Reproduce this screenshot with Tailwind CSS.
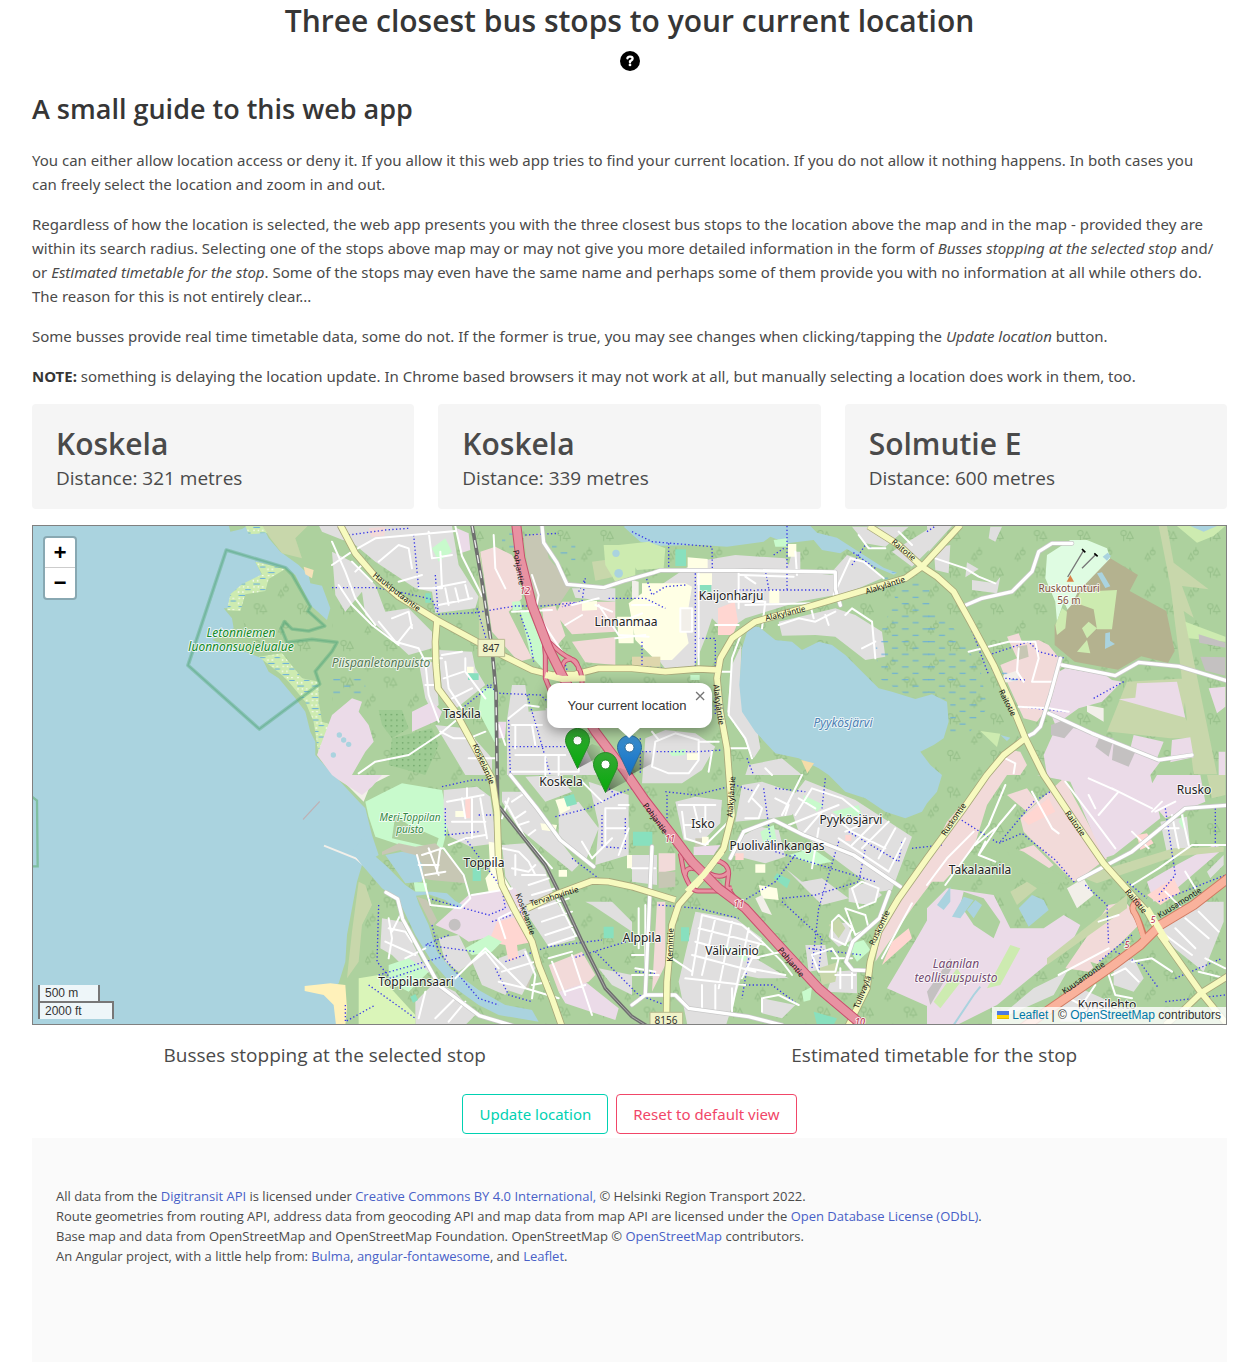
<!DOCTYPE html>
<html lang="en">
<head>
<meta charset="utf-8">
<meta name="viewport" content="width=device-width, initial-scale=1">
<title>Three closest bus stops</title>
<script src="https://cdn.jsdelivr.net/npm/@tailwindcss/browser@4"></script>
</head>
<body class="bg-white font-['Open_Sans','Noto_Sans',sans-serif] text-[15px] leading-6 text-[#4a4a4a]">
<main class="px-8">
  <header class="flex flex-col items-center pt-[3px]">
    <h1 class="text-center text-[30px] leading-9 font-semibold text-[#363636]">Three closest bus stops to your current location</h1>
    <button type="button" aria-label="Toggle guide" class="mt-3 size-5">
      <svg viewBox="0 0 512 512" class="size-5"><circle cx="256" cy="256" r="256"/><path fill="none" stroke="#fff" stroke-width="60" stroke-linecap="round" stroke-linejoin="round" d="M190 186c5-30 28-44 62-44h12c34 0 58 22 58 52 0 24-10 38-34 51l-32 20v20"/><circle cx="256" cy="356" r="35" fill="#fff"/></svg>
    </button>
  </header>

  <section class="font-['Noto_Sans','Open_Sans',sans-serif]">
    <h2 class="mt-5 mb-[21px] font-['Open_Sans','Noto_Sans',sans-serif] text-[27px] leading-9 font-semibold text-[#363636]">A small guide to this web app</h2>
    <div class="flex flex-col gap-4">
      <p>You can either allow location access or deny it. If you allow it this web app tries to find your current location. If you do not allow it nothing happens. In both cases you can&nbsp;freely select the location and zoom in and out.</p>
      <p>Regardless of how the location is selected, the web app presents you with the three closest bus stops to the location above the map and in the map - provided they are within its search radius. Selecting one of the stops above map may or may not give you more detailed information in the form of <em>Busses stopping at the selected stop</em> and/<wbr>or <em>Estimated timetable for the stop</em>. Some of the stops may even have the same name and perhaps some of them provide you with no information at all while others do. The reason for this is not entirely clear...</p>
      <p>Some busses provide real time timetable data, some do not. If the former is true, you may see changes when clicking/tapping the <em>Update location</em> button.</p>
      <p><strong class="text-[#363636]">NOTE:</strong> something is delaying the location update. In Chrome based browsers it may not work at all, but manually selecting a location does work in them, too.</p>
    </div>
  </section>

  <section class="mt-4 grid grid-cols-3 gap-6">
    <article class="rounded bg-[#f5f5f5] px-6 pt-5 pb-4"><h3 class="text-[30px] leading-10 font-semibold">Koskela</h3><p class="text-[19px] leading-[29px]">Distance: 321 metres</p></article>
    <article class="rounded bg-[#f5f5f5] px-6 pt-5 pb-4"><h3 class="text-[30px] leading-10 font-semibold">Koskela</h3><p class="text-[19px] leading-[29px]">Distance: 339 metres</p></article>
    <article class="rounded bg-[#f5f5f5] px-6 pt-5 pb-4"><h3 class="text-[30px] leading-10 font-semibold">Solmutie E</h3><p class="text-[19px] leading-[29px]">Distance: 600 metres</p></article>
  </section>

  <section aria-label="Map" class="relative mt-4 h-[500px] overflow-hidden border border-[#808080] bg-[#aad3df] font-['Liberation_Sans',sans-serif] text-xs">
    <svg viewBox="1 1 1193 498" preserveAspectRatio="xMidYMid slice" class="block h-full w-full">
      <defs>
        <pattern id="trees" width="130" height="110" patternUnits="userSpaceOnUse"><g fill="none" stroke="#8fb982" stroke-opacity=".75" stroke-width="3"><circle cx="25" cy="24" r="8"/><path d="M25 32v16M44 20l-10 20h20zM44 40v8"/><path d="M97 85l-8 16h16zM97 101v8M112 80v-14"/><circle cx="112" cy="82" r="7"/></g></pattern>
        <pattern id="marsh" width="62" height="38" patternUnits="userSpaceOnUse"><path stroke="#5fa9e0" stroke-width="3" d="M4 8h20M36 27h18"/></pattern>
        <pattern id="wetland" width="44" height="34" patternUnits="userSpaceOnUse"><path fill="#cdebb0" d="M0 0h44v34H0z"/><path stroke="#5fa9e0" stroke-width="3" d="M4 7h20M24 24h16"/><path stroke="#fff" stroke-width="4" stroke-dasharray="4 9" d="M4 16h38M2 31h20"/></pattern>
        <pattern id="orchard" width="17" height="17" patternUnits="userSpaceOnUse"><path fill="#9ecb93" d="M0 0h17v17H0z"/><circle cx="8" cy="8" r="2" fill="#589455"/></pattern>
      </defs>
      <g transform="scale(.33333)">
        <!-- land -->
        <path fill="#add19e" d="M590 0h60l-20 12-35 8zM690 0L710 40 745 80 800 120 830 150 835 175 870 182 895 250 885 285 835 240 790 150 760 130 670 110 690 150 630 180 600 205 595 250 575 250 600 280 605 310 540 345 580 360 640 380 690 400 710 440 740 460 790 520 820 560 835 620 850 650 850 690 890 735 915 760 985 835 1000 850 1020 930 1040 990 990 1020 975 1070 960 1150 945 1230 940 1310 920 1375 900 1385 915 1500 3600 1500 3600 0z"/>
        <path fill="url(#trees)" d="M900 0h2685v1500H1000V1100L1100 900 900 700zM620 170l160-10 80 150v140H700l-60-120z"/>
        <!-- west shore -->
        <path fill="url(#wetland)" d="M670 110l90 22-50 30-10 36-60 10-15 50-40-2 10-48 35-30 60-30zM680 395l70-10 60 75 50 10v60l10 60 30 10-40 90-15-100-25-60-50-60-20-20zM640 3h60l10 20-60 5z"/>
        <path fill="#c8d7ab" d="M690 0h140l-40 40 20 60-60-15-35-45z"/>
        <path fill="#f5e1b9" d="M815 125l30 10-5 25-20-12z"/>
        <path fill="#c7a0a0" opacity=".7" d="M812 882l50-54 2 3-50 54z"/>
        <path fill="none" stroke="#7fbfa0" stroke-width="7" d="M0 815l15 12 2 197H0"/>
        <path fill="none" stroke="#f2efe9" stroke-width="6" d="M876 962l95 38 60 50"/>
        <g transform="translate(900 0)">
          <path fill="#e0dfdf" d="M-40 0l70-5 330 8 20 117 60 95-10 35-120 15-10-65-50-10-120-80-60-50-100-40zM0 80l60 30 70 70 30 80 70-10 70 70v50l-70 20L100 270l-10-70-50 60-30-50zM320 375l100 5 10 50 30 50-100 80-30-60zM260 410l50 2 10 128-20 20-20-40zM310 600l90 10 80 90v50h-80l-30-50zM525 585l15-105h40l10 80 60-5 50 55 45 140H525zM720 190h130v40l-120-12zM640 550h60l100 200h-100z"/>
          <path fill="#f2dad9" d="M445 80l45-15 50 25 20 40 10 90-40 40 70 140-40 10-80-90zM610 180l45-15 10 35-20 30zM630 250l40-8 30 90-30 36-30-38zM690 230h160v90l-130 8-50-60zM720 350l130-14v84l-90-8zM110 10l50-5-3 28-40 3z"/>
          <path fill="#c8facc" d="M565 255l25 5 50 120-5 55-40-45zM450 490h45v175l-55-105zM540 230l25-2 5 25-28 5zM300 70l40-30 20 40-40 30z"/>
          <path fill="#c7c7b4" d="M575 35l60-15 15 80 70 80-40 60h-60l-30-90z"/>
          <path fill="#c8d7ab" d="M440 85h6l20 230 15 15-10 50-30-20z"/>
          <path fill="#ebdbe8" d="M0 570l60-50 30 10-10 30 30 40 15 50-25 30-40 70H0l-45-60zM240 560l60-30 30 30-10 25-80 35zM375 10l35 15 5 50-30 10zM495 590h28l-4 50h-24z"/>
          <path fill="url(#orchard)" d="M140 555h70l20 55-50 30-30-40zM180 640l120-30 20 50-40 90-110-30z"/>
          <path fill="#c8d7ab" d="M780 110l60-8v55l-50 10z"/>
          <path fill="#cdebb0" d="M815 60h95v90l-60 20-30-50z"/>
          <circle cx="852" cy="85" r="11" fill="#aad3df"/><circle cx="860" cy="145" r="13" fill="#aad3df"/>
          <path fill="#ffffe5" d="M750 232l45-5v28l-45 2zM405 425h20v20h-20zM855 275h50v80h-45z"/>
          <path fill="#88e0be" d="M280 205h16v28h-16zM408 445h32v20h-32z"/>
          <path fill="url(#marsh)" d="M0 455h100v60H0zM510 20h40v60h-40zM660 60h70v50h-70z"/>
          <g fill="#aad3df"><circle cx="22" cy="630" r="8"/><circle cx="35" cy="645" r="8"/><circle cx="50" cy="658" r="8"/><circle cx="4" cy="690" r="8"/></g>
        </g>
        <g transform="translate(1800 0)">
          <path fill="#aad3df" d="M-20 3h555l20 20 60 15 30 20 110 70 40 15-10 6-60-25-80-52-20 13-55-10-25-30-80 10-50-20-20 15-110 15-80-5-120 2-60-12-50-45z"/>
          <path fill="#cdebb0" d="M-40 60l90-10 50 20-5 60-80 5z"/>
          <path fill="#e0dfdf" d="M190 110l120-20 150 10 20 40 130 10v60l-110 20-160 50-60 40-40-40-20 60-40 100-70 5-30-40-30-200zM660 5h170l-70 60-60-10zM600 140l45-50 60 20 45 50-70 30-60 20zM440 290l170-40 60 20 80 50 10 75-60 10-90-70-60-5-100 2zM300 420l28-60-3 110 10 60 40 80 10 60-20 30-30-60-50-80zM40 640l60-25 90 10 60 40-40 70-60 40H30zM350 720l100-20 60 50H340zM780 80l120-75v60l-60 60zM480 80h25l0 65-40-5z"/>
          <path fill="#ffffe5" d="M30 175h130l20 10-20 120 10 50-50 50H70l-60-60-20-110 40-30zM167 97l60 5v32h-60zM195 145h45v35h-45zM468 57h25v38h-25zM412 195h30v40h-30zM165 685h35v20h-35z"/>
          <path fill="#f2efe9" d="M145 250h40v70h-40zM0 165l20 5v50H0z"/>
          <path fill="#ffd6d1" d="M258 250l50-20 10 60-15 40h-45z"/>
          <path fill="#88e0be" d="M130 73h32v50h-32zM203 180h35v20h-35z"/>
          <path fill="#c8facc" d="M110 680l50-8v18l-40 4zM425 45l40-5v25h-35zM175 450h28v15h-28z"/>
          <path fill="#ded6ac" d="M0 395h85v30H0z"/>
          <path fill="url(#marsh)" d="M740 130l160 40v330l-60 20-100-60-10-100 60-140z"/>
          <path fill="#aad3df" d="M350 305L380 305 430 345 480 350 510 375 560 350 600 360 640 390 700 450 740 490 780 500 850 522 900 508 945 530 950 590 935 640 905 660 865 680 895 720 930 750 915 800 885 835 870 860 820 880 760 860 700 820 640 800 590 750 560 730 500 700 430 685 370 620 330 560 322 480 330 370z"/>
          <path fill="#f5dca8" d="M508 705l38 10-20 30z"/>
        </g>
        <g transform="translate(2685 0)">
          <path fill="#e0dfdf" d="M0 3h75L5 80zM190 5h35l-20 45-20-10zM20 70l50-10-5 85-40-10zM120 112l35 20-40 25zM135 165l70 10 15-20-10 50-75-10z"/>
          <path fill="#c8d7ab" d="M695 3h25l20 110 105 80-80-10 35 95-30-20 100 490h-70L730 180zM540 620l60-150 180-10-10 110 40 70-80 0-180-20z"/>
          <path fill="#dffce2" d="M430 45h50l60 25 10 30-50 70-30 50-40 50-20-40-20 60-5-60-30-70 5-70z"/>
          <path fill="#b4b28f" d="M550 100l83 50-25 48 110 60 25 120-20 36-80-20-70 40-130-24-60-50v-60l50-60 20-40z"/>
          <path fill="#cdebb0" d="M460 200l110-5-15 118h-45l-10-60-55-20zM385 300l20-50 15 10-5 50-25 20zM465 310l20-20 25 20-30 30zM450 380l30-35 10 40zM750 3h145l-35 30-50 20zM775 290l120 45v15l-110-10zM160 618l60 8-10 40z"/>
          <path fill="#aad3df" d="M510 145l15-3 25 42-15 5zM527 95l15-12 10 10-12 14zM535 325l14-3 0 25 15 10-30 15zM790 3h80l-40 17zM172 350l10 20 5 8-12-2zM220 630l30 8-10 10z"/>
          <path fill="#ebdbe8" d="M415 430l120 20 20 15 30 5-60 60-70 20-70 50-20-50 30-110zM630 475l120-5 25 108-200-55 50-5zM390 600l110 20 200 90-30 40H410l-60-60zM620 630l90 20-20 50-80-30zM735 645l55-8 10 60-70 15zM845 490l50-5v60l-25 20zM350 690l60-30 80 10-30 80H360zM875 680h20v70h-20z"/>
          <path fill="#f2dad9" d="M240 335l35-10 10 25 50-5 30 15 40 50-15 60-30 80-30 40-40-10-50-110-20-50 50-20zM190 750l60-75 30 5 20 40-20 30z"/>
          <path fill="#c4c1c1" d="M815 328l80 25v15l-78-15zM820 395l75 2v55l-60-15zM520 630l40 10-15 55-40-30zM560 655l65 25-20 45-50-20zM372 600l40-15 30 20-30 35-40-10z"/>
          <path fill="#c7c7b4" d="M270 365l30-5 5 35-30 10z"/>
          <path fill="#f2efe9" d="M480 540l50 10v40l-50-30zM230 450l45-15v30l-50 10z"/>
          <path fill="url(#marsh)" d="M0 250l60 30 100 150 20 120-50 70-60 10V530l-70-30zM225 440h50v30h-50z"/>
        </g>
        <g transform="translate(900 750)">
          <path fill="#f2efe9" d="M15 0h160l-60 30-20 50z"/><path fill="#ebdbe8" d="M0 0h150l-30 35-30 25-70-45z"/>
          <path fill="#c8facc" d="M100 80l50-25 60-30 120 20 20 100-20 80-50 10-150-50-20-60z"/>
          <path fill="#add19e" d="M190 120l40 30 90 40-10 30-130-30z"/>
          <path fill="#c7c7b4" d="M150 230l50-25 50 10 60-10 60 60 35 60-110-10-40-10 10-40-60-40-55 15zM255 365l30 10 30 60-15 20zM375 510l50 55-10 10-45-35zM540 600l60-10-10 50-60 10z"/>
          <path fill="#e0dfdf" d="M335 45l100-10 40 30 20 140-80 10-60-30-20-60zM510 50h60l170 220-20 20-160-130-50-80zM580 5l100-5 40 50-80 30zM510 210l70-5 60 80 30 90 40 60 20 60-80 20-60-90-70-120zM680 100l60-20 60 80-40 100-80-80zM770 20l120 40v180l-100 30 10-120zM150 430l60 10 60 120 30 30-60 10-60-60-35-20zM320 490l60-10 40 80-40 30-40-30zM420 560l40-30 50 30 40 50-30 50-70-30zM500 550l80-30 30 60-40 80-60-20zM250 680l60-60 60 30 60 70-30 30H250zM760 380l80 0 60 60v30l-60-40-60-40zM800 580l100 20v60l-60-30z"/>
          <path fill="#ebdbe8" d="M310 450l100-90 140-20 30 80-80 60-90 20-30-20zM680 650l80-30 100 80-10 35-150-50z"/>
          <path fill="#ffd6d1" d="M495 440l80-20 30 80-50 10 5 40-30 10-10-50-50-10zM400 70h15v60h-15zM690 560l40-10 10 50-50 10z"/>
          <path fill="#f2dad9" d="M650 570l100-40 40 70-20 20-90 30z"/>
          <path fill="#ffffe5" d="M470 200l30 5 10 90 30 50-70 5-10-40 15-20zM370 108h28v18h-28zM670 75l35-8 10 35-30 15zM625 145l50 5-5 20-40-5zM680 285h25v20h-25zM885 240h20v40h-20z"/>
          <path fill="#c8facc" d="M400 520l70-40 40 20-30 30-60 10zM245 320l40 5v25h-35zM170 570l60-20 60 40-60 60-60-30z"/>
          <path fill="#88e0be" d="M422 280h25v38h-25zM695 65l30-8 10 30-30 8zM815 455h30v35h-30zM235 665l15-8 8 18-15 8z"/>
          <circle cx="368" cy="449" r="18" fill="#c4c1c1"/>
          <path fill="#c8d7ab" d="M80 320l20 10 20 60-30 60-10 110-35 50 5-50 10-90z"/>
          <path fill="#daf5b9" d="M80 610l60-10 110 120v30H80z"/>
          <!-- harbour basin and channel -->
          <path fill="#aad3df" d="M160 240L210 230 250 240 272 270 270 320 220 325zM60 230L100 180 125 240 160 270 220 330 250 350 300 350 345 355 370 378 395 392 375 402 340 375 290 358 252 362 262 390 290 450 315 530 360 585 440 645 520 690 600 705 620 740 500 720 440 690 370 640 300 560 250 480 200 375 150 340 90 270z"/>
          <path fill="#fff1ba" d="M-82 633L-5 625 40 630 45 700 40 750H12L5 690-25 660-82 648z"/>
        </g>
        <g transform="translate(1800 750)">
          <path fill="#e0dfdf" d="M130 80l60-15 80 10-5 70-60 60-50-10zM190 410l120 20 80 60-20 60 100 60-90 0-50-10-70 220-90-50-30-150zM330 30l60-10 120 40-30 60-60 10-110 10zM470 80l50-65 150 60 170 110-60 160-40 5-240-180zM320 190l60-35 60 10 20 80-60 20-100-25zM460 280l50 40 60-10 80 60-80 20-60-60zM650 340l60-20 40 40-40 30-60-10zM600 440l50 5 10 50-40 20-30-30zM520 510h60l10 70-60 10zM605 590l70-5v70l-90-5zM0 240l75 0v90L0 320zM150 600l120 30 20 80-110 0zM390 670l100 20-40 40-60-15z"/>
          <path fill="#f2dad9" d="M80 235h50v50l-50 10zM75 380h25v190l-40 80zM850 300l50-60v80l-60 80-110 160 20-110z"/>
          <path fill="#ebdbe8" d="M900 410v290l-135-60 95-160zM185 215l80-5-20 30h-60z"/>
          <path fill="#c7c7b4" d="M80 290h50v45l-50 5zM190 190l40 0v20l-40 5z"/>
          <path fill="#c8facc" d="M515 60l60 30-20 20-40-30zM385 170l40-20 10 50-40 10zM470 240l70-20 60 40-50 10zM645 510l50-15 20 30-40 35zM510 650l30-15-5 40-20 5zM270 510l80 20-10 30zM600 110l80-20 10 30-60 10z"/>
          <path fill="#88e0be" d="M3 170h58v42H3zM425 310l10-15 40 20-10 25zM147 457h24v42h-24zM545 710l70 20-10 20h-50z"/>
          <path fill="#ffffe5" d="M380 330l55 10 5 35-50-5zM370 268h30v25h-30zM210 185h20v25h-20z"/>
          <path fill="#c8d7ab" d="M590 450l30-20 20 30-20 30zM560 580l60-20-10 60-40 10z"/>
          <path fill="#ffd6d1" d="M310 235h25v20h-25zM640 180h18v18h-18zM780 500l50-40 10 30-90 80z"/>
          <path fill="#f2efe9" d="M370 370l20-10 30 60-30-10z"/>
        </g>
        <g transform="translate(2685 750)">
          <path fill="#f2dad9" d="M60 140l120-140h60l-60 90-40 130-90 100-50 0v-60zM280 130l130-120 130 240-80 60-20 10-150-150zM415 580l130-190 50-10 50 60-60 60-100 90zM260 230l60-20 60 60-30 20zM240 60l60-20 30 40-30 30z"/>
          <path fill="#ebdbe8" d="M330 0h340l30 130-140 110-30 10L430 20zM0 400l60-60 140 20 50 100 100 0 60-40 50 30-30 60-220 180-120 60H0zM690 0h130l15 80-120 50-60-70zM660 320l70-40 130-70 30 10-140 120-70 40z"/>
          <path fill="#ffd6d1" d="M285 130l80-60 20 40-80 40zM630 180l30-5 20 30-40 20zM660 360l80-50 20 40-60 40z"/>
          <path fill="#f2efe9" d="M420 340l50-30 30 50-50 40z"/>
          <path fill="#e0dfdf" d="M700 140l80-15 10 100-70 10zM320 640l100-50-40 70-180 80zM560 570l60-20 30 60-30 40-60-20zM400 700l60-60 90 40v60H400zM700 460l110-80 80 0v60l-60 150-100-80zM840 290l50-50v30l-40 40z"/>
          <path fill="#c4c1c1" d="M0 650l70-100 10 20-70 120z"/>
          <path fill="#c8d7ab" d="M460 305l280-85 150-5v15l-150 15-230 80zM600 360l-240 190 0 20 240-170zM840 0h55v60l-40 10zM250 350l50-30 30 20-60 50z"/>
          <path fill="#cdebb0" d="M20 680l70-100 20 30-70 90zM180 640l70-130 30 10-60 110z"/>
          <path fill="#add19e" d="M110 350l60 20 50 70-20 50-60-40-40-60zM230 210l60 20 140 90-80 5-60-10zM490 560l30 10-10 30z"/>
          <path fill="#aad3df" d="M30 390l40-55v45l-20 25zM75 425l35-60 30 10-40 55zM120 405l25-30 20 15-25 40zM275 400l40-40 35 15 15 30-60 50z"/>
          <path fill="none" stroke="#aad3df" stroke-width="6" d="M80 750l60-90 20-25"/>
          <path fill="#c8facc" d="M755 140l15-25v50z"/>
        </g>
        <!-- paths and cycleways -->
        <g fill="none" stroke="#3838e8" stroke-width="4" stroke-dasharray="4 7">
          <path d="M900 188h130l60 10 110 25 20 45 110-5 120-20h80l100-10M950 30l110-15 70-5M1145 30l15 160M1335 250l45 150 10 70-100 80M1210 150l8 110M1365 480l40 25 120 5 45 40 5 40M1430 585l5 160M1430 665h190M1485 510l30 100 40 140M1465 270l30 80 10 60M1480 30l100-5M1600 420l20 60-50 40M1640 200l20-40-10 70-60 15M1730 220h110l60 30"/>
          <path d="M1800 20l60 30 180 15 1 65M1910 55v75M1900 135h300l10 55M2265 3v190M2110 195h280M1990 145v280M1960 180l-60 5-40 25-20-60M1830 350v75l120 10M2000 340h50v90M2050 420v150M1825 640v110M1830 680h170l70-5M2145 700l20 50M2225 90l30-20M2460 120l40-60 20 10M2530 130l-70-50M2690 130l60 60 60 100 60 160"/>
          <path d="M2685 20l30-20M2790 240l100 210 80 160 60 120M2870 390l120-40 30 30 80 20M3185 520l90-50M2920 460l60 5M2965 545l140 15"/>
          <path d="M1230 785l90-20h80M1240 850v80l100-10M1340 870h60M1300 940l110 150 10 60-50 20-180-50M1040 1140l-5 170 40 50 120-40M1200 1200l20 80 120 140 60 20M1250 1230l-70 30 150 20M1380 1190l90-30M1420 1310l130-45 160-20M1390 1330l40 80 70 20M1620 1300l130-40 70-20M1700 760l50 50 50-20M1710 870v100M1570 875l100-25 100-50M1620 1000l80 60M1780 880v90l-70-5M940 1440v50l90-50M1010 1380l140 100M1040 1350l210-60M1690 1280l130 130 80 30"/>
          <path d="M1900 800l90 10 120-30 60 20M1905 810v100M2195 790l20 150M2230 790l90 10M2205 945l30 20M2230 980l100 30 200 60M2290 990l-60 80-100 60M1880 1140l120 10 120 30M2250 1120l100-10 130-40 20-100M2250 1130l120 110-10 100M2420 950l-60 200-20 180M2380 760l-10 90M2450 920l150 90 10-60M2640 970l90-10M1810 1340l60 5M2140 1380l80 0 80 60M2330 1270l160 20M2150 1300l-20 120"/>
          <path d="M2780 880l120 75 70-30 100 80 60 70M2905 950l100-120 50-30M3160 1080l65 60 5 120M3285 1070l60 50M3400 850l30 200-50 60M3550 850v120M3300 1230l-100 80M3250 1280l80 40 50 70M3190 1340l-90 80M3380 1130l200-80M3430 1360l140-60M3400 1430l180-20"/>
        </g>
        <!-- local streets -->
        <g fill="none" stroke="#fff" stroke-width="6" stroke-linecap="round" stroke-linejoin="round">
          <path d="M900 120l60-40 70-40 110-10 130-12M900 50l40 90 30 80 60 80M920 180l40 60 60 60 80 60M960 110l60 60M1000 110l-30 30M1040 110l60-50 30 10 10 60M1100 170l70-20M1190 20l10 80M1200 190l100-20M1160 190h70l-5-110M1220 240l100-20M1240 190l10 50M1270 190l10 40M1300 180l10 40M1200 100l60-10M1080 280l50-20 10 50M1040 290l50 60 70 20 20 40M1100 350l40-50M1170 400h60M1180 410l10 100 30 80M1230 390l60-10M1235 460l60-20M1260 520l60-30M1300 400v40l60 80M1240 410l10 80 40 60M1180 480h40M1225 620l40 20 60 0 10 40M1310 640l50-20M1310 700h80M1430 580l50-40 40 5M1440 600h90M1500 600l10 60M1450 690h150M1540 690v60M1580 690v60M1600 640h60M1640 680v60M1400 600l20 60M1440 740h200M1450 600v70"/>
          <path d="M1500 150l20 60-10 50 40 60 40 60M1440 260l120-5M1700 240l60 90 90 5M1620 240l80-20M1780 285l50-20M1600 300l50-30M1750 340l90-10M1740 260l-50-20M980 745l50-35 100-20 90-60 60-50"/>
          <path d="M1385 30l5 100 30 60M1270 3l20 90 60 120M1800 240h70M2000 140v300M2120 140v110M2125 150l160 5M2140 155l30 20M2290 80l5 70M2090 230h110l-10 80M2140 240l200-5M2120 300h-70M2240 300l60-20 50 10 60-30M2335 240l10 40M2380 270l10 30M2405 210l50-110 40 10 60 50M2440 270l20-20 60 40 10 110M2490 370l40-20M1945 250h35v70h-35zM2130 320l-30 80-10 170 50 70 20 60M2065 440h30M2095 670l50 0M1870 650l60-25 70 20v60l-30 40-60 0-50-20zM1860 620l20 25M2000 650h60M2040 680l-10 60M2200 730l20 20M2480 30l30 40 50 0M2600 20l40 40"/>
          <path d="M1245 830l110-20M1260 890h100M1250 960l50-20 60-10M1290 820l10 60M1320 820v120M1345 820l20 120M1305 790v30M1170 990l60-20M1160 1020h60M1180 1050l60-10M1190 970l30 80M1225 970l-10 70M1155 990l40 150 90 10 30-30-20-70-60-80M1320 1110l120-20M1430 820l-20 60M1420 830l60 110 80 90M1440 830l30-20M1450 880l30-20M1460 900l30-10M1490 930l20-15M1410 970l50 10 30 30 20 40M1440 1030l50 10 20-20M1450 990v60M1470 1050l70 0M1490 1080l60-20M1500 1110l70-20M1520 1150l90-30M1530 1190l90-30M1540 1230l90-30M1550 1260l90-30M1570 1110l60 120M1550 1300l70-20M1560 1310l40 100M1620 1290l60 180M1600 1400l60-20M1760 840h30M1650 770l60 60M1720 850h60M1720 910h60M1740 940l-60 60M1790 910l-30 80M1720 850v110M1650 950l30 50"/>
          <path d="M1070 1180l10 60-10 60M1070 1210l50 10 20 30M1060 1250l90 40M1110 1160l-30 60M1120 1300l60-30M1270 1360l90-90 60 60 60 60 100 30M1310 1320l50-40 40 50M1400 1180l20 60M1400 1180l60-30M1480 1280l30 70-10 70M1410 1340l100-30M1400 1370l80 20M1500 1380l50-10M1210 1480l60-60M1250 1490l50-60M1160 1480l20-80"/>
          <path d="M1940 840l110 0M1950 860l10 80 60 20 80-80M1985 840l20 80M2020 840v60M1960 900h80M2160 820l30 30-10 30-40 0M2230 820l40 20-10 30M2180 780l-30 50M2250 870l60-120M2290 870l50-80 90 30 50 40M2270 900l150-60M2400 870l60 50 100 50M2440 920l70-30M2460 960l80-80M2490 970l80-80M2540 1000l50-90M2570 1040l50-100M2420 940l150 100M2360 910l-10 60-10 60M2300 820l50 30M2370 860l-60 70M2460 1090l30-20 50 20-10 40-50 20zM2440 1150l60 20 10 40-40 20zM2400 1190l20-20 40 40-20 50-40-20zM2340 1290l60-20 20 30-10 40h-50zM2400 1300h60M2410 1350h60M2425 1330v60M2460 1330v60M2640 1135l-90 165"/>
          <path d="M2010 1170l120 30 60 50M2010 1170l-20 120-10 60M2000 1210l200 50M1990 1250l190 50M1980 1290l190 50M2050 1180l-40 170M2100 1190l-40 200M2150 1210l-50 240M2180 1260l-50 100M2150 1330l110 20M2160 1300l90-20M2190 1250l60 60 30 40M1960 1360l180 20M2010 1380v70M2050 1380v80M2100 1390v70M1980 1340l-60-40M2190 1420l50-10 60 30M2190 1420v40M1800 1030h70M1800 1290h40M1810 1330l60 10M1840 1140v200M1820 1150v120M1800 1350h80"/>
          <path d="M2810 380l80-20 40-10 80 0 10 50-20 70h70M2960 370l-5 70 20 30M2960 545l90 5 60 10M2710 100l90 30 40 25 50 20M2920 700l30 15-5 30M2740 1080l130-180 50-120M2685 1080l60-80 80-80M2840 990l60-90 50-60M2830 960l60-50M2860 950l-20 40 50 20M3000 800l60 110 20 15M3100 770l150 200M3170 760l90 40-60 70M3240 790l120 60M3190 850l-20-40M3370 860l60-30M3360 860l30-30M3300 920l30 30 20 20M3380 910h60M3420 870l20 100M3450 870l20 90M3300 1080l80-50 100-70 110 0M3400 1100l60 60M3460 1040l30 50M3080 1350l150-80M3300 1310l60-10 60 40M3240 1350l40-20 40 40M3430 1210l60 60M3460 1180l70 60M3500 1160l60 60M3400 1230l80 60M3520 1300l60 30M3500 1340l80 20M3200 1190l60-20M3230 1350l20 60 50 10M3150 1440l40-60M3110 1420l40 20"/>
        </g>
        <!-- tertiary roads -->
        <g fill="none" stroke="#c8c8c8" stroke-width="14" stroke-linecap="round" stroke-linejoin="round"><path d="M1530 3l5 50 40 60 30 65 110 10 60-20 90-25 20-7h225l300 5v50l15 50M1435 750l80 100 70 95 100 80M1062 1102l35 20 15 60 60 110 50 90 120 90 100 30M2095 1000l40-80 90-35 90 45 150 60 140 95M2572 1100l-30 80-80 70-20 60 20 25 50 2M1800 1440l40-30h90l40 40 180 25 100 25M1860 965l-20 440M3085 400l-30 110-30 95-20 20-40 20M3090 420l100 20 60 12 70-40 120 12 150 45M3600 840l-140 10-160 130-160 85M2790 245l60-25 90-20 60-60 20-60 40-25 60 0M3050 565l130 60 200 80 100-15"/></g>
        <g fill="none" stroke="#fff" stroke-width="10" stroke-linecap="round" stroke-linejoin="round"><path d="M1530 3l5 50 40 60 30 65 110 10 60-20 90-25 20-7h225l300 5v50l15 50M1435 750l80 100 70 95 100 80M1062 1102l35 20 15 60 60 110 50 90 120 90 100 30M2095 1000l40-80 90-35 90 45 150 60 140 95M2572 1100l-30 80-80 70-20 60 20 25 50 2M1800 1440l40-30h90l40 40 180 25 100 25M1860 965l-20 440M3085 400l-30 110-30 95-20 20-40 20M3090 420l100 20 60 12 70-40 120 12 150 45M3600 840l-140 10-160 130-160 85M2790 245l60-25 90-20 60-60 20-60 40-25 60 0M3050 565l130 60 200 80 100-15"/></g>
        <!-- railway -->
        <g fill="none"><path stroke="#6f6f6f" stroke-width="11" d="M1320 0l30 170 30 200 12 130 5 340 63 80 80 100 50 100 60 130 70 140 80 85 80 50"/><path stroke="#eee" stroke-width="4" stroke-dasharray="24 22" d="M1320 0l30 170 30 200 12 130 3 250"/><path stroke="#aaa" stroke-width="3" d="M1397 840l63 80 80 100 50 100 60 130 70 140 80 85 80 50"/></g>
        <!-- ski lifts -->
        <path fill="none" stroke="#777" stroke-width="4" d="M3107 156l48-80M3150 130l42-42"/><path d="M3150 72l10 10M3187 85l10 9" stroke="#000" stroke-width="5"/><path fill="#db8348" d="M3104 170l11-20 11 20z"/>
        <!-- secondary roads -->
        <g fill="none" stroke-linejoin="round">
          <path stroke="#a8a87a" stroke-width="22" d="M925 0l45 85 60 70 70 60 115 70 120 65 85 45 80 40 60 15 70-2 70-18h100l100 10 100-8 58 3M1215 285l-5 65 2 70 6 70 52 70 60 110 50 90 15 100 5 160 10 60 35 70 55 100 20 70 40 100 35 100 210 35M1485 1150l95-45 100-37 50 2 70 15 130 40M2670 125l-50 35-120 35-170 50-160 45-70 50-35 60-10 60 10 100 20 110 15 200-25 100-65 90-70 80-20 60-15 170-2 150M2510 3l90 57 70 65 45 30 50 45 50 90 70 130 50 110 45 110 55 110 80 120 100 145 130 145 40 70 120 170 90 110M2670 125l115-125M2980 640l-65 50-50 60-70 100-110 150-85 120-60 100-25 90-10 80-60 120M3400 1500l60-50 50-48 80-50"/>
          <path stroke="#f7fabf" stroke-width="17" d="M925 0l45 85 60 70 70 60 115 70 120 65 85 45 80 40 60 15 70-2 70-18h100l100 10 100-8 58 3M1215 285l-5 65 2 70 6 70 52 70 60 110 50 90 15 100 5 160 10 60 35 70 55 100 20 70 40 100 35 100 210 35M1485 1150l95-45 100-37 50 2 70 15 130 40M2670 125l-50 35-120 35-170 50-160 45-70 50-35 60-10 60 10 100 20 110 15 200-25 100-65 90-70 80-20 60-15 170-2 150M2510 3l90 57 70 65 45 30 50 45 50 90 70 130 50 110 45 110 55 110 80 120 100 145 130 145 40 70 120 170 90 110M2670 125l115-125M2980 640l-65 50-50 60-70 100-110 150-85 120-60 100-25 90-10 80-60 120M3400 1500l60-50 50-48 80-50"/>
        </g>
        <!-- motorway, trunk road and ramps -->
        <g fill="none" stroke-linejoin="round">
          <path stroke="#c84e6d" stroke-width="15" d="M1535 330l5 60 0 70 20 50M1550 350q40 40 65 50q30 20 35 60l0 60M1590 470q-5-60 15-65q30-10 35 30M1945 985l10 55q20 60 45 58h70l30-10M2050 1005q40 10 40 40l-5 40 20 30M2090 1040q-20 25-60 5M1960 1050q0-30 40-15"/>
          <path stroke="#e892a2" stroke-width="9" d="M1535 330l5 60 0 70 20 50M1550 350q40 40 65 50q30 20 35 60l0 60M1590 470q-5-60 15-65q30-10 35 30M1945 985l10 55q20 60 45 58h70l30-10M2050 1005q40 10 40 40l-5 40 20 30M2090 1040q-20 25-60 5M1960 1050q0-30 40-15"/>
          <path stroke="#c84e6d" stroke-width="30" d="M1453 0l12 100 35 140 50 130 40 80 50 90 50 80 90 120 55 80 85 110 60 80 80 80 80 60 100 110 120 130 130 110"/>
          <path stroke="#e892a2" stroke-width="24" d="M1453 0l12 100 35 140 50 130 40 80 50 90 50 80 90 120 55 80 85 110 60 80 80 80 80 60 100 110 120 130 130 110"/>
          <path stroke="#d07a62" stroke-width="30" d="M2970 1510l145-100 130-90 80-60 60-60 100-60 110-85"/>
          <path stroke="#d07a62" stroke-width="20" d="M3335 1230q-20-60-30-70q-10-25 20-30"/>
          <path stroke="#f9b29c" stroke-width="24" d="M2970 1510l145-100 130-90 80-60 60-60 100-60 110-85"/>
          <path stroke="#f9b29c" stroke-width="15" d="M3335 1240q-20-70-30-80q-10-25 20-30"/>
          <path stroke="#f7fabf" stroke-width="18" d="M2070 980l-55 70-50 50M3345 1150l60 100M1540 450l50 12 70-2"/>
        </g>
        <!-- nature reserve -->
        <path fill="none" stroke="#5dac80" stroke-opacity=".45" stroke-width="11" stroke-linejoin="round" d="M583 75l177 53 20 20 55 97-7 13 50 45-48 15-50-6-23-22-9 20 17 42 75-9 75 9-15 27-50 60 13 38-181 135-214-191z"/>
        <path fill="none" stroke="#4ba175" stroke-opacity=".35" stroke-width="4" d="M583 75l177 53 20 20 55 97-7 13 50 45-48 15-50-6-23-22-9 20 17 42 75-9 75 9-15 27-50 60 13 38-181 135-214-191z"/>
        <path fill="#f1f3c8" stroke="#b7b98f" stroke-width="3" d="M1338 343h80v52h-80zM1854 1462h98v60h-98z"/>
      </g>
      <g class="font-['Noto_Sans',sans-serif]" text-anchor="middle" stroke="#fff" stroke-opacity=".75" stroke-width="2" stroke-linejoin="round" paint-order="stroke" font-size="12" fill="#222">
        <text x="594" y="101">Linnanmaa</text><text x="699" y="75">Kaijonharju</text><text x="430" y="193">Taskila</text><text x="529" y="261">Koskela</text><text x="671" y="303">Isko</text><text x="819" y="299">Pyykösjärvi</text><text x="745" y="325">Puolivälinkangas</text><text x="452" y="342">Toppila</text><text x="610" y="417">Alppila</text><text x="700" y="430">Välivainio</text><text x="384" y="461">Toppilansaari</text><text x="948" y="349">Takalaanila</text><text x="1162" y="269">Rusko</text><text x="1075" y="484">Kynsilehto</text>
        <g font-style="italic"><g fill="#148a28"><text x="209" y="112">Letonniemen</text><text x="209" y="126">luonnonsuojelualue</text></g>
        <text x="349" y="142" fill="#567a56">Piispanletonpuisto</text><g fill="#338844" font-size="10"><text x="378" y="296">Meri-Toppilan</text><text x="378" y="308">puisto</text></g>
        <text x="811" y="202" fill="#4d80b3">Pyykösjärvi</text><g fill="#734a70"><text x="924" y="443">Laanilan</text><text x="924" y="457">teollisuuspuisto</text></g></g>
        <g fill="#805040" font-size="10"><text x="1037" y="67">Ruskotunturi</text><text x="1037" y="79">56 m</text></g>
        <g font-size="10" stroke="none" fill="#333"><text x="459" y="127">847</text><text x="634" y="499">8156</text></g>
        <g font-size="8" stroke="none" fill="#111">
          <text transform="translate(363 69) rotate(38)">Haukiputaantie</text><text transform="translate(484 43) rotate(80)">Pohjantie</text><text transform="translate(449 240) rotate(66)">Koskelantie</text><text transform="translate(491 390) rotate(70)">Koskelantie</text><text transform="translate(523 374) rotate(-17)">Tervahovintie</text><text transform="translate(621 295) rotate(54)">Pohjantie</text><text transform="translate(757 439) rotate(50)">Pohjantie</text><text transform="translate(754 91) rotate(-14)">Alakyläntie</text><text transform="translate(854 63) rotate(-18)">Alakyläntie</text><text transform="translate(684 180) rotate(82)">Alakyläntie</text><text transform="translate(702 272) rotate(-86)">Alakyläntie</text><text transform="translate(870 27) rotate(40)">Raitotie</text><text transform="translate(973 179) rotate(63)">Raitotie</text><text transform="translate(1041 300) rotate(55)">Raitotie</text><text transform="translate(1102 378) rotate(50)">Raitotie</text><text transform="translate(924 296) rotate(-56)">Ruskontie</text><text transform="translate(850 404) rotate(-65)">Ruskontie</text><text transform="translate(641 420) rotate(-88)">Kemintie</text><text transform="translate(833 468) rotate(-68)">Tullivaylä</text><text transform="translate(1149 380) rotate(-32)">Kuusamontie</text><text transform="translate(1053 455) rotate(-35)">Kuusamontie</text>
        </g>
        <g font-size="9" font-style="italic" fill="#b52040"><text x="493" y="69">12</text><text x="638" y="317">11</text><text x="707" y="382">11</text><text x="828" y="500">10</text><text x="1121" y="398">5</text><text x="1095" y="423">5</text></g>
      </g>
    </svg>

    <!-- markers -->
    <svg aria-hidden="true" class="absolute size-0"><defs>
      <linearGradient id="blue" x2="0" y2="1"><stop stop-color="#3b8fce"/><stop offset="1" stop-color="#126fc6"/></linearGradient>
      <linearGradient id="green" x2="0" y2="1"><stop stop-color="#35a834"/><stop offset="1" stop-color="#06aa0b"/></linearGradient>
      <linearGradient id="shade" x1="0" y1="1" x2="1" y2="0"><stop stop-color="#000" stop-opacity=".5"/><stop offset="1" stop-color="#000" stop-opacity="0"/></linearGradient>
      <path id="pin" d="M12.500 .5C5.900.500.500 6 .500 12.500c0 3 1.500 6 3 9L12.500 40.500l9-19c1.500-3 3-6 3-9C24.500 6 19.100.500 12.500.500z"/>
      <path id="cast" d="M12.500 40.500L18 22l9-6 9 3-2 10z"/>
    </defs></svg>
    <button type="button" aria-label="Bus stop Koskela, 339 metres" class="absolute top-[202px] left-[calc(50%-65px)] h-[41px] w-[25px]"><svg viewBox="0 0 25 41" class="h-[41px] w-[25px] overflow-visible"><use href="#cast" fill="url(#shade)"/><use href="#pin" fill="url(#green)" stroke="#278a28"/><circle cx="12.500" cy="12.500" r="4.500" fill="#fff" stroke="#278a28"/></svg></button>
    <button type="button" aria-label="Your location" class="absolute top-[209px] left-[calc(50%-13px)] h-[41px] w-[25px]"><svg viewBox="0 0 25 41" class="h-[41px] w-[25px] overflow-visible"><use href="#cast" fill="url(#shade)"/><use href="#pin" fill="url(#blue)" stroke="#2e6c97"/><circle cx="12.500" cy="12.500" r="4.500" fill="#fff" stroke="#2e6c97"/></svg></button>
    <button type="button" aria-label="Bus stop Koskela, 321 metres" class="absolute top-[226px] left-[calc(50%-37px)] h-[41px] w-[25px]"><svg viewBox="0 0 25 41" class="h-[41px] w-[25px] overflow-visible"><use href="#cast" fill="url(#shade)"/><use href="#pin" fill="url(#green)" stroke="#278a28"/><circle cx="12.500" cy="12.500" r="4.500" fill="#fff" stroke="#278a28"/></svg></button>

    <!-- popup -->
    <div role="dialog" aria-label="Location" class="absolute top-[157px] left-1/2 -translate-x-1/2">
      <div class="rounded-xl bg-white py-3 pr-[26px] pl-[21px] text-[13px] leading-[21px] whitespace-nowrap text-[#333] shadow-[0_3px_14px_rgba(0,0,0,.4)]">Your current location</div>
      <button type="button" aria-label="Close popup" class="absolute top-[1px] right-0 grid size-6 place-items-center"><svg viewBox="0 0 10 10" class="size-[10px]"><path d="M1 1l8 8M9 1L1 9" stroke="#757575" stroke-width="1.300"/></svg></button>
      <svg viewBox="0 0 24 12" class="absolute top-[44px] left-1/2 h-3 w-6 -translate-x-1/2"><path fill="#fff" d="M0 0h24L12 11z"/></svg>
    </div>

    <!-- zoom control -->
    <div class="absolute top-[10px] left-[10px] flex flex-col rounded border-2 border-black/20 bg-white bg-clip-padding text-center font-['Liberation_Mono',monospace] text-[22px] leading-[26px] font-bold text-black">
      <button type="button" aria-label="Zoom in" class="h-[30px] w-[30px] border-b border-[#ccc] pt-1">+</button>
      <button type="button" aria-label="Zoom out" class="h-[30px] w-[30px] pt-1">−</button>
    </div>

    <!-- scale bars -->
    <div class="absolute bottom-[5px] left-[5px] flex flex-col items-start text-xs leading-4 text-[#333]">
      <div class="w-[62px] border-x-2 border-[#777] bg-white/80 px-[5px]">500 m</div>
      <div class="w-[76px] border-x-2 border-t-2 border-[#777] bg-white/80 px-[5px]">2000 ft</div>
    </div>

    <!-- attribution -->
    <div class="absolute right-0 bottom-0 bg-white/80 px-[5px] text-xs leading-[17px] text-[#333]">
      <a href="https://leafletjs.com" class="text-[#0078a8]"><svg viewBox="0 0 12 8" class="inline h-2 w-3 align-baseline"><path fill="#4c7be1" d="M0 0h12v4H0z"/><path fill="#ffd500" d="M0 4h12v3H0z"/><path fill="#e0bc00" d="M0 7h12v1H0z"/></svg> Leaflet</a> | © <a href="https://www.openstreetmap.org/copyright" class="text-[#0078a8]">OpenStreetMap</a> contributors
    </div>
  </section>

  <section class="mt-4 grid grid-cols-2 gap-6 text-center text-[19px] leading-[29px]">
    <h4>Busses stopping at the selected stop</h4>
    <h4>Estimated timetable for the stop</h4>
  </section>

  <div class="mt-6 flex justify-center gap-2 font-['Noto_Sans',sans-serif]">
    <button type="button" class="h-10 rounded border border-[#00d1b2] px-4 text-[#00d1b2]">Update location</button>
    <button type="button" class="h-10 rounded border border-[#f14668] px-4 text-[#f14668]">Reset to default view</button>
  </div>

  <footer class="mt-1 bg-[#fafafa] px-6 pt-12 pb-24 text-[13px] leading-5">
    <p>All data from the <a class="text-[#485fc7]" href="https://digitransit.fi">Digitransit API</a> is licensed under <a class="text-[#485fc7]" href="https://creativecommons.org/licenses/by/4.0/">Creative Commons BY 4.0 International,</a> © Helsinki Region Transport 2022.</p>
    <p>Route geometries from routing API, address data from geocoding API and map data from map API are licensed under the <a class="text-[#485fc7]" href="https://opendatacommons.org/licenses/odbl/">Open Database License (ODbL)</a>.</p>
    <p>Base map and data from OpenStreetMap and OpenStreetMap Foundation. OpenStreetMap © <a class="text-[#485fc7]" href="https://www.openstreetmap.org">OpenStreetMap</a> contributors.</p>
    <p>An Angular project, with a little help from: <a class="text-[#485fc7]" href="https://bulma.io">Bulma</a>, <a class="text-[#485fc7]" href="https://github.com/FortAwesome/angular-fontawesome">angular-fontawesome</a>, and <a class="text-[#485fc7]" href="https://leafletjs.com">Leaflet</a>.</p>
  </footer>
</main>
</body>
</html>
